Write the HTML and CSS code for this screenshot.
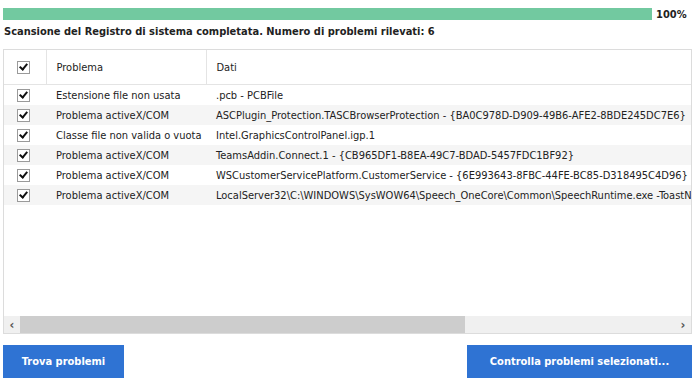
FILE: index.html
```html
<!DOCTYPE html>
<html lang="it">
<head>
    <meta charset="UTF-8">
    <title>Scansione del Registro</title>
    <link rel="stylesheet" href="styles.css">
</head>
<body>
<div id="scanner">
    <div class="progress">
        <div class="progress-track"><div class="progress-fill"></div></div>
        <span class="progress-label">100%</span>
    </div>
    <div class="status">Scansione del Registro di sistema completata. Numero di problemi rilevati: 6</div>

    <div class="results">
        <div class="results-scroll">
            <table class="grid">
                <colgroup>
                    <col class="col-check">
                    <col class="col-problem">
                    <col class="col-data">
                </colgroup>
                <thead>
                    <tr>
                        <th class="cell-check"><span class="check"></span></th>
                        <th>Problema</th>
                        <th>Dati</th>
                    </tr>
                </thead>
                <tbody>
                    <tr>
                        <td class="cell-check"><span class="check"></span></td>
                        <td>Estensione file non usata</td>
                        <td>.pcb - PCBFile</td>
                    </tr>
                    <tr>
                        <td class="cell-check"><span class="check"></span></td>
                        <td>Problema activeX/COM</td>
                        <td>ASCPlugin_Protection.TASCBrowserProtection - {BA0C978D-D909-49B6-AFE2-8BDE245DC7E6}</td>
                    </tr>
                    <tr>
                        <td class="cell-check"><span class="check"></span></td>
                        <td>Classe file non valida o vuota</td>
                        <td>Intel.GraphicsControlPanel.igp.1</td>
                    </tr>
                    <tr>
                        <td class="cell-check"><span class="check"></span></td>
                        <td>Problema activeX/COM</td>
                        <td>TeamsAddin.Connect.1 - {CB965DF1-B8EA-49C7-BDAD-5457FDC1BF92}</td>
                    </tr>
                    <tr>
                        <td class="cell-check"><span class="check"></span></td>
                        <td>Problema activeX/COM</td>
                        <td>WSCustomerServicePlatform.CustomerService - {6E993643-8FBC-44FE-BC85-D318495C4D96}</td>
                    </tr>
                    <tr>
                        <td class="cell-check"><span class="check"></span></td>
                        <td>Problema activeX/COM</td>
                        <td>LocalServer32\C:\WINDOWS\SysWOW64\Speech_OneCore\Common\SpeechRuntime.exe -ToastNo</td>
                    </tr>
                </tbody>
            </table>
        </div>
        <div class="hscroll">
            <span class="arrow">&lsaquo;</span>
            <div class="hscroll-track"><div class="hscroll-thumb"></div></div>
            <span class="arrow">&rsaquo;</span>
        </div>
    </div>

    <div class="actions">
        <button class="btn">Trova problemi</button>
        <button class="btn btn-wide">Controlla problemi selezionati...</button>
    </div>
</div>
</body>
</html>
```

FILE: styles.css
```css
body {
    margin: 0;
    background-color: #ffffff;
    font-family: "DejaVu Sans Condensed", "DejaVu Sans", sans-serif;
    font-size: 11px;
    color: #222222;
}
#scanner {
    padding: 8px 5px 0 3px;
}
.progress {
    display: flex;
    align-items: center;
    gap: 4px;
    height: 12px;
}
.progress-track {
    flex: 1;
    height: 12px;
    background-color: #e6e6e6;
}
.progress-fill {
    width: 100%;
    height: 100%;
    background-color: #72c9a0;
}
.progress-label {
    width: 36px;
    font-weight: bold;
    font-size: 11px;
}
.status {
    margin-top: 5px;
    padding-left: 1px;
    font-weight: bold;
    height: 14px;
    line-height: 14px;
}
.results {
    margin-top: 10px;
    height: 283px;
    border: 1px solid #dcdcdc;
    display: flex;
    flex-direction: column;
}
.results-scroll {
    flex: 1;
    overflow: hidden;
}
.grid {
    border-collapse: collapse;
    table-layout: fixed;
    width: 760px;
    white-space: nowrap;
}
.col-check {
    width: 42px;
}
.col-problem {
    width: 160px;
}
.col-data {
    width: 558px;
}
.grid th {
    height: 34px;
    padding: 0 0 0 10px;
    font-weight: normal;
    text-align: left;
    border-bottom: 1px solid #e4e4e4;
    border-left: 1px solid #e4e4e4;
}
.grid td {
    height: 20px;
    padding: 0 0 0 10px;
    overflow: hidden;
}
.grid tbody tr:nth-child(even) td {
    background-color: #f5f5f5;
}
.grid .cell-check {
    padding: 0 0 0 13px;
    border-left: none;
}
.check {
    display: block;
    width: 11px;
    height: 11px;
    border: 1px solid #9a9a9a;
    background: #ffffff;
    position: relative;
}
.check::after {
    content: "";
    position: absolute;
    left: 3px;
    top: 0px;
    width: 3px;
    height: 6px;
    border: solid #111111;
    border-width: 0 2px 2px 0;
    transform: rotate(40deg);
}
.hscroll {
    display: flex;
    align-items: center;
    height: 17px;
    background-color: #f0f0f0;
}
.arrow {
    width: 16px;
    text-align: center;
    font-size: 13px;
    font-weight: bold;
    color: #555555;
    line-height: 17px;
}
.hscroll-track {
    flex: 1;
    height: 100%;
}
.hscroll-thumb {
    width: 68%;
    height: 100%;
    background-color: #cdcdcd;
}
.actions {
    margin-top: 11px;
    display: flex;
    justify-content: space-between;
}
.btn {
    height: 33px;
    border: none;
    background-color: #2f73d3;
    color: #ffffff;
    font-family: "DejaVu Sans Condensed", "DejaVu Sans", sans-serif;
    font-weight: bold;
    font-size: 11px;
    width: 121px;
}
.btn-wide {
    width: 225px;
}
```
